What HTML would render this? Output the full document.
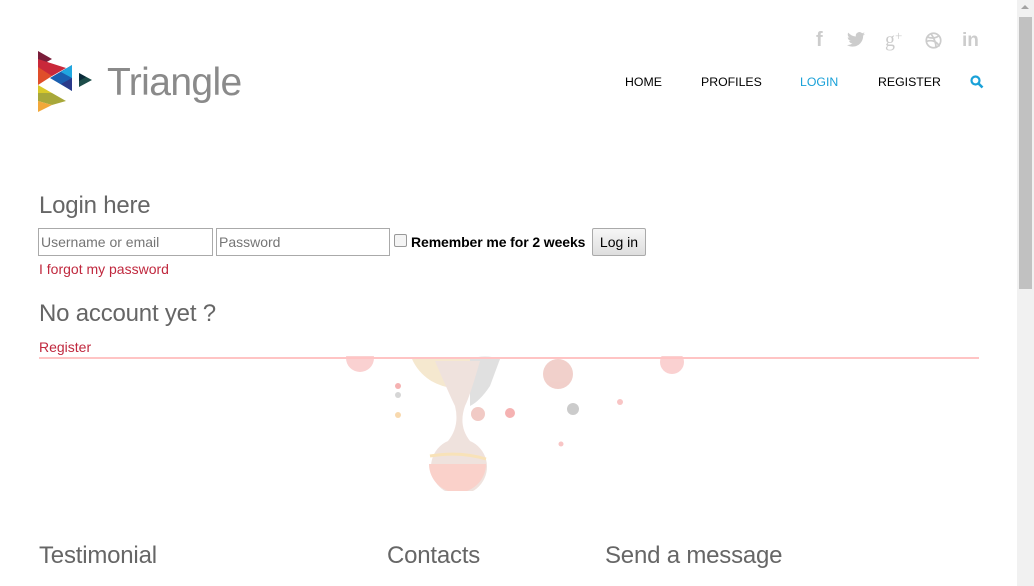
<!DOCTYPE html>
<html><head><meta charset="utf-8"><style>
*{margin:0;padding:0;box-sizing:border-box}
body{width:1034px;height:586px;overflow:hidden;background:#fff;font-family:"Liberation Sans",Arial,sans-serif;position:relative}
.abs{position:absolute}
.nav{top:75px;font-size:12.3px;color:#000;white-space:nowrap}
h2{font-weight:normal;color:#666;font-size:24px;position:absolute;white-space:nowrap;letter-spacing:-0.2px}
input.t{position:absolute;top:228px;height:28px;border:1px solid #aaa;font:14px "Liberation Sans",sans-serif;padding:0 2px;color:#777}
a{color:#c0283e;text-decoration:none}
</style></head><body>
<svg class="abs" style="left:38px;top:51px" width="56" height="62" viewBox="0 0 56 62">
<polygon points="0,0 14,8 0,16" fill="#7a1d3a"/>
<polygon points="0,8 28,17 14,25 0,25" fill="#c9283a"/>
<polygon points="0,16 14,25 0,34" fill="#e04e2a"/>
<polygon points="34,14 34,40 12,27" fill="#1a5fb0"/>
<polygon points="34,14 23,21 34,27" fill="#20a7e0"/>
<polygon points="23,33 34,40 34,27" fill="#2a3a8a"/>
<polygon points="0,34 14,42 0,50" fill="#d8c92a"/>
<polygon points="0,42 14,42 28,50 14,54 0,50" fill="#a8a83a"/>
<polygon points="0,50 14,54 0,61" fill="#f2a83a"/>
<polygon points="41,22 54,29 41,36" fill="#1d4d4a"/>
<polygon points="41,22 48,26 41,30" fill="#0a2a3a"/>
</svg>
<div class="abs" style="left:107px;top:61px;font-size:39px;color:#8a8a8a;letter-spacing:-0.6px">Triangle</div>
<div class="abs" style="left:816px;top:29px;font-size:20px;font-weight:bold;color:#ccc">f</div>
<svg class="abs" style="left:847px;top:32px" width="18" height="15" viewBox="0 0 24 20"><path d="M24 2.4a10 10 0 0 1-2.8.8 5 5 0 0 0 2.1-2.7 10 10 0 0 1-3.1 1.2A4.9 4.9 0 0 0 11.8 6 14 14 0 0 1 1.7.9a4.9 4.9 0 0 0 1.5 6.6A4.9 4.9 0 0 1 1 6.9a4.9 4.9 0 0 0 3.9 4.8 5 5 0 0 1-2.2.1 4.9 4.9 0 0 0 4.6 3.4A9.9 9.9 0 0 1 0 17.3 14 14 0 0 0 7.5 19.5c9 0 14-7.5 14-14v-.6A10 10 0 0 0 24 2.4z" fill="#ccc"/></svg>
<div class="abs" style="left:885px;top:28px;font-size:20px;color:#ccc;font-family:'Liberation Serif',serif">g<span style="font-size:13px;vertical-align:6px">+</span></div>
<svg class="abs" style="left:925px;top:32px" width="17" height="17" viewBox="0 0 20 20" fill="none" stroke="#ccc" stroke-width="2"><circle cx="10" cy="10" r="8.5"/><path d="M3 6c5 2 10 1 14-2M2 11c6-2 12 0 15 6M7 2c3 4 6 10 6 17"/></svg>
<div class="abs" style="left:962px;top:30px;font-size:19px;font-weight:bold;color:#ccc">in</div>
<div class="abs nav" style="left:625px">HOME</div>
<div class="abs nav" style="left:701px">PROFILES</div>
<div class="abs nav" style="left:800px;color:#1aa1d8">LOGIN</div>
<div class="abs nav" style="left:878px">REGISTER</div>
<svg class="abs" style="left:970px;top:75px" width="14" height="14" viewBox="0 0 14 14"><circle cx="5.5" cy="5.5" r="4" fill="none" stroke="#1aa1d8" stroke-width="2.2"/><path d="M8.5 8.5l4 4" stroke="#1aa1d8" stroke-width="2.6"/></svg>
<h2 style="left:39px;top:192px">Login here</h2>
<input class="t" style="left:38px;width:175px" placeholder="Username or email">
<input class="t" style="left:216px;width:174px" placeholder="Password">
<div class="abs" style="left:394px;top:234px;width:13px;height:13px;border:1px solid #999;border-radius:2px;background:#f4f4f4"></div>
<div class="abs" style="left:411px;top:234px;font-size:14px;font-weight:bold;color:#000;letter-spacing:-0.1px">Remember me for 2 weeks</div>
<div class="abs" style="left:592px;top:228px;width:54px;height:28px;border:1px solid #aaa;border-radius:2px;background:linear-gradient(#f6f6f6,#dedede);font-size:14px;text-align:center;line-height:26px;color:#000">Log in</div>
<a class="abs" style="left:39px;top:261px;font-size:14px">I forgot my password</a>
<h2 style="left:39px;top:300px">No account yet ?</h2>
<a class="abs" style="left:39px;top:339px;font-size:14px">Register</a>
<svg class="abs" style="left:330px;top:356px" width="370" height="135" viewBox="0 0 370 135">
<g opacity="0.6">
<circle cx="30" cy="2" r="14" fill="#f7b3b3"/>
<path d="M82 3 A48 48 0 0 0 170 3 Z" fill="#f0d9b0"/>
<path d="M140 3 A48 48 0 0 1 170 3 L160 30 Q150 45 140 50 Z" fill="#ccc"/>
<path d="M105 5 Q120 40 125 50 Q130 70 118 85 A28 28 0 1 0 140 85 Q128 70 135 50 Q140 40 150 5 Z" fill="#e6cfc8"/>
<path d="M99 108 A28 28 0 0 0 156 108 Z" fill="#f7b3a8"/>
<path d="M100 100 Q130 95 156 103" stroke="#f4d08a" stroke-width="3" fill="none"/>
<circle cx="148" cy="58" r="7" fill="#e8a8a0"/>
<circle cx="180" cy="57" r="5" fill="#f08080"/>
<circle cx="228" cy="18" r="15" fill="#e8b0a8"/>
<circle cx="243" cy="53" r="6" fill="#aaa"/>
<circle cx="342" cy="6" r="12" fill="#f7b3b3"/>
<circle cx="68" cy="30" r="3" fill="#f08080"/>
<circle cx="68" cy="39" r="3" fill="#bbb"/>
<circle cx="68" cy="59" r="3" fill="#f4c07a"/>
<circle cx="290" cy="46" r="3" fill="#f5a0a0"/>
<circle cx="231" cy="88" r="2.5" fill="#f5a0a0"/>
</g></svg>
<div class="abs" style="left:39px;top:357px;width:940px;height:2px;background:#ffc4c4"></div>
<h2 style="left:39px;top:542px">Testimonial</h2>
<h2 style="left:387px;top:542px">Contacts</h2>
<h2 style="left:605px;top:542px">Send a message</h2>
<div class="abs" style="left:1017px;top:0;width:17px;height:586px;background:#f1f1f1"></div>
<div class="abs" style="left:1019px;top:17px;width:13px;height:272px;background:#c1c1c1"></div>
<div class="abs" style="left:1021px;top:5px;width:0;height:0;border-left:4px solid transparent;border-right:4px solid transparent;border-bottom:4px solid #a3a3a3"></div>
</body></html>
